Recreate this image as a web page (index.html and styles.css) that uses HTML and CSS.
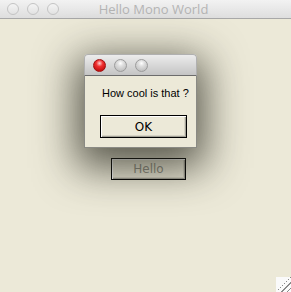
FILE: index.html
```html
<!DOCTYPE html>
<html lang="en">

<head>
    <meta charset="UTF-8">
    <title>Hello Mono World</title>
    <link rel="stylesheet" href="styles.css">
</head>

<body>
    <div class="window">
        <div class="titlebar">
            <div class="lights">
                <span class="light"></span>
                <span class="light"></span>
                <span class="light"></span>
            </div>
            <div class="title">Hello Mono World</div>
        </div>
        <div class="content">
            <button class="btn hello">Hello</button>

            <div class="dialog">
                <div class="dlg-bar">
                    <span class="dot red"></span>
                    <span class="dot"></span>
                    <span class="dot"></span>
                </div>
                <div class="dlg-body">
                    <p class="msg">How cool is that ?</p>
                    <button class="btn ok">OK</button>
                </div>
            </div>
            <div class="grip"></div>
        </div>
    </div>
</body>

</html>
```

FILE: styles.css
```css
body {
    margin: 0;
    font-family: "DejaVu Sans", sans-serif;
}

.window {
    width: 291px;
    height: 292px;
    display: flex;
    flex-direction: column;
    background: #ece9d8;
    overflow: hidden;
}

.titlebar {
    height: 18px;
    border-bottom: 1px solid #a8a8a8;
    background: linear-gradient(#f2f2f2, #dedede);
    position: relative;
    display: flex;
    align-items: center;
}

.lights {
    display: flex;
    gap: 8px;
    padding-left: 7px;
}

.light {
    width: 10px;
    height: 10px;
    border: 1px solid #c4c4c4;
    border-radius: 50%;
    background: linear-gradient(#f4f4f4, #e2e2e2);
}

.title {
    position: absolute;
    left: 0;
    right: 0;
    text-align: center;
    font-family: "Open Sans", sans-serif;
    font-size: 13px;
    color: #b4b4b4;
    padding-left: 16px;
}

.content {
    flex: 1;
    position: relative;
    padding: 139px 0 0 111px;
}

.btn {
    font-family: "DejaVu Sans", sans-serif;
    font-size: 12px;
    border: 1px solid #000;
    box-shadow: inset 1px 1px 0 #ffffff, inset -1px -1px 0 #a09f94, inset -2px -2px 0 #d6d3c4;
    background: #ece9d8;
    color: #000;
    padding: 0;
    margin: 0;
    display: block;
}

.hello {
    width: 75px;
    height: 22px;
    color: #8e8d82;
}

.dialog {
    position: absolute;
    left: 84px;
    top: 35px;
    width: 113px;
    height: 94px;
    box-shadow: 0 12px 40px 8px rgba(40, 40, 30, 0.75);
    border-radius: 4px 4px 0 0;
    display: flex;
    flex-direction: column;
}

.dlg-bar {
    height: 20px;
    border: 1px solid #b0b0b0;
    border-bottom: 1px solid #6c6c6c;
    border-radius: 4px 4px 0 0;
    background: linear-gradient(#ececec, #c4c4c4);
    display: flex;
    align-items: center;
    gap: 8px;
    padding-left: 8px;
}

.dot {
    width: 11px;
    height: 11px;
    border-radius: 50%;
    border: 1px solid #9c9c9c;
    background: radial-gradient(circle at 50% 30%, #ffffff 0, #e0e0e0 30%, #b4b4b4 100%);
}

.dot.red {
    border-color: #a01010;
    background: radial-gradient(circle at 50% 30%, #ffd0d0 0, #f03030 35%, #b00000 100%);
}

.dlg-body {
    flex: 1;
    background: #ece9d8;
    border: 1px solid #8a8a84;
    border-top: none;
    display: flex;
    flex-direction: column;
    padding-left: 15px;
}

.msg {
    margin: 11px 0 0 2px;
    font-family: "Liberation Sans", sans-serif;
    font-size: 11px;
    line-height: 13px;
    white-space: nowrap;
    color: #000;
}

.ok {
    width: 87px;
    height: 23px;
    margin-top: 15px;
}

.grip {
    position: absolute;
    right: 0;
    bottom: 0;
    width: 15px;
    height: 15px;
    background:
        linear-gradient(135deg, #fafafa 0 50%, transparent 50%),
        repeating-linear-gradient(135deg, #fafafa 0 2px, #8a8a8a 2px 3px, #fafafa 3px 4px);
}
```
